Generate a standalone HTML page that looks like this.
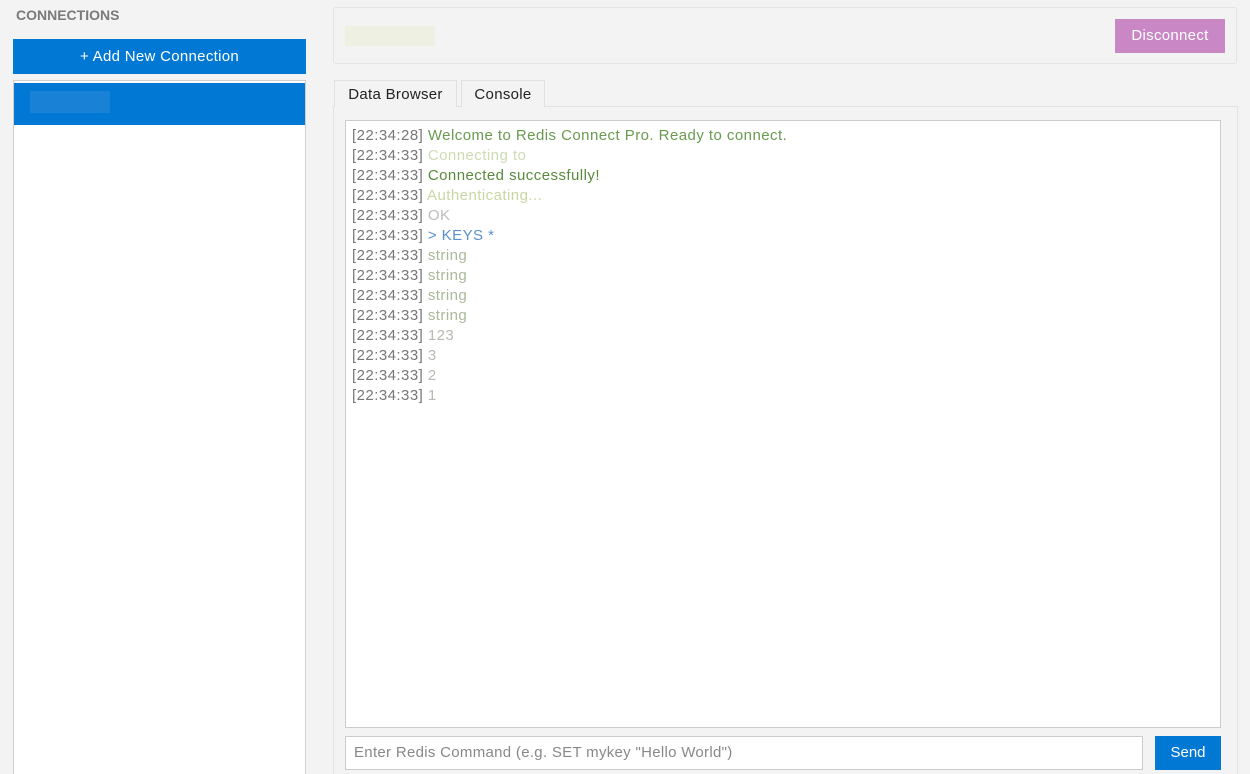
<!DOCTYPE html>
<html><head><style>
*{box-sizing:border-box;margin:0;padding:0}
html{width:1250px;height:774px;overflow:hidden}
body{width:1250px;height:774px;background:#f3f3f3;font-family:"Liberation Sans",sans-serif;position:relative;overflow:hidden}
.abs{position:absolute}
.hd{left:16px;top:7px;font-size:14px;font-weight:bold;color:#7a7a7a}
.add{left:13px;top:39px;width:293px;height:35px;background:#0078d4;color:#fff;font-size:15px;text-align:center;line-height:35px;letter-spacing:.3px}
.list{left:13px;top:80px;width:293px;height:694px;background:#fff;border:1px solid #d0d0d0;border-bottom:none}
.sel{left:14px;top:83px;width:291px;height:42px;background:#0078d4}
.top{left:333px;top:7px;width:904px;height:57px;border:1px solid #e3e3e3;border-radius:3px;background:#f3f3f3}
.disc{left:1115px;top:19px;width:110px;height:34px;background:#c987c6;color:#fff;font-size:15px;text-align:center;line-height:34px;letter-spacing:.3px}
.tab{top:80px;height:27px;border:1px solid #e0e0e0;border-bottom:none;font-size:15px;color:#222;line-height:27px;text-align:center;background:#f3f3f3;letter-spacing:.3px}
.panel{left:333px;top:106px;width:905px;height:668px;border:1px solid #e3e3e3;border-bottom:none}
.con{left:345px;top:120px;width:876px;height:608px;background:#fff;border:1px solid #ccc;padding:5px 6px;font-size:15px;line-height:20px;color:#777;letter-spacing:.45px}
.input{left:345px;top:736px;width:798px;height:34px;background:#fff;border:1px solid #ccc;font-size:15px;color:#888;line-height:32px;padding-left:8px;letter-spacing:.3px}
.send{left:1155px;top:736px;width:66px;height:34px;background:#0078d4;color:#fff;font-size:15px;text-align:center;line-height:34px}
</style></head><body>
<div class="abs hd">CONNECTIONS</div>
<div class="abs add">+ Add New Connection</div>
<div class="abs list"></div>
<div class="abs sel"><div class="abs" style="left:16px;top:8px;width:80px;height:22px;background:#2a88d8;opacity:.6"></div></div>
<div class="abs top"><div class="abs" style="left:11px;top:18px;width:90px;height:20px;background:#eef0e2"></div></div>
<div class="abs disc">Disconnect</div>
<div class="abs panel"></div>
<div class="abs tab" style="left:334px;width:123px">Data Browser</div>
<div class="abs tab" style="left:461px;width:84px">Console</div>
<div class="abs con">
<div>[22:34:28] <span style="color:#6a9a50">Welcome to Redis Connect Pro. Ready to connect.</span></div>
<div>[22:34:33] <span style="color:#ccdcb2">Connecting to</span></div>
<div>[22:34:33] <span style="color:#5a8a3c">Connected successfully!</span></div>
<div>[22:34:33] <span style="color:#cad6a2">Authenticating...</span></div>
<div>[22:34:33] <span style="color:#bbb">OK</span></div>
<div>[22:34:33] <span style="color:#5b90c8">&gt; KEYS *</span></div>
<div>[22:34:33] <span style="color:#a9b99b">string</span></div>
<div>[22:34:33] <span style="color:#a9b99b">string</span></div>
<div>[22:34:33] <span style="color:#a9b99b">string</span></div>
<div>[22:34:33] <span style="color:#a9b99b">string</span></div>
<div>[22:34:33] <span style="color:#b5bcae">123</span></div>
<div>[22:34:33] <span style="color:#b5bcae">3</span></div>
<div>[22:34:33] <span style="color:#b5bcae">2</span></div>
<div>[22:34:33] <span style="color:#b5bcae">1</span></div>
</div>
<div class="abs input">Enter Redis Command (e.g. SET mykey "Hello World")</div>
<div class="abs send">Send</div>
</body></html>
